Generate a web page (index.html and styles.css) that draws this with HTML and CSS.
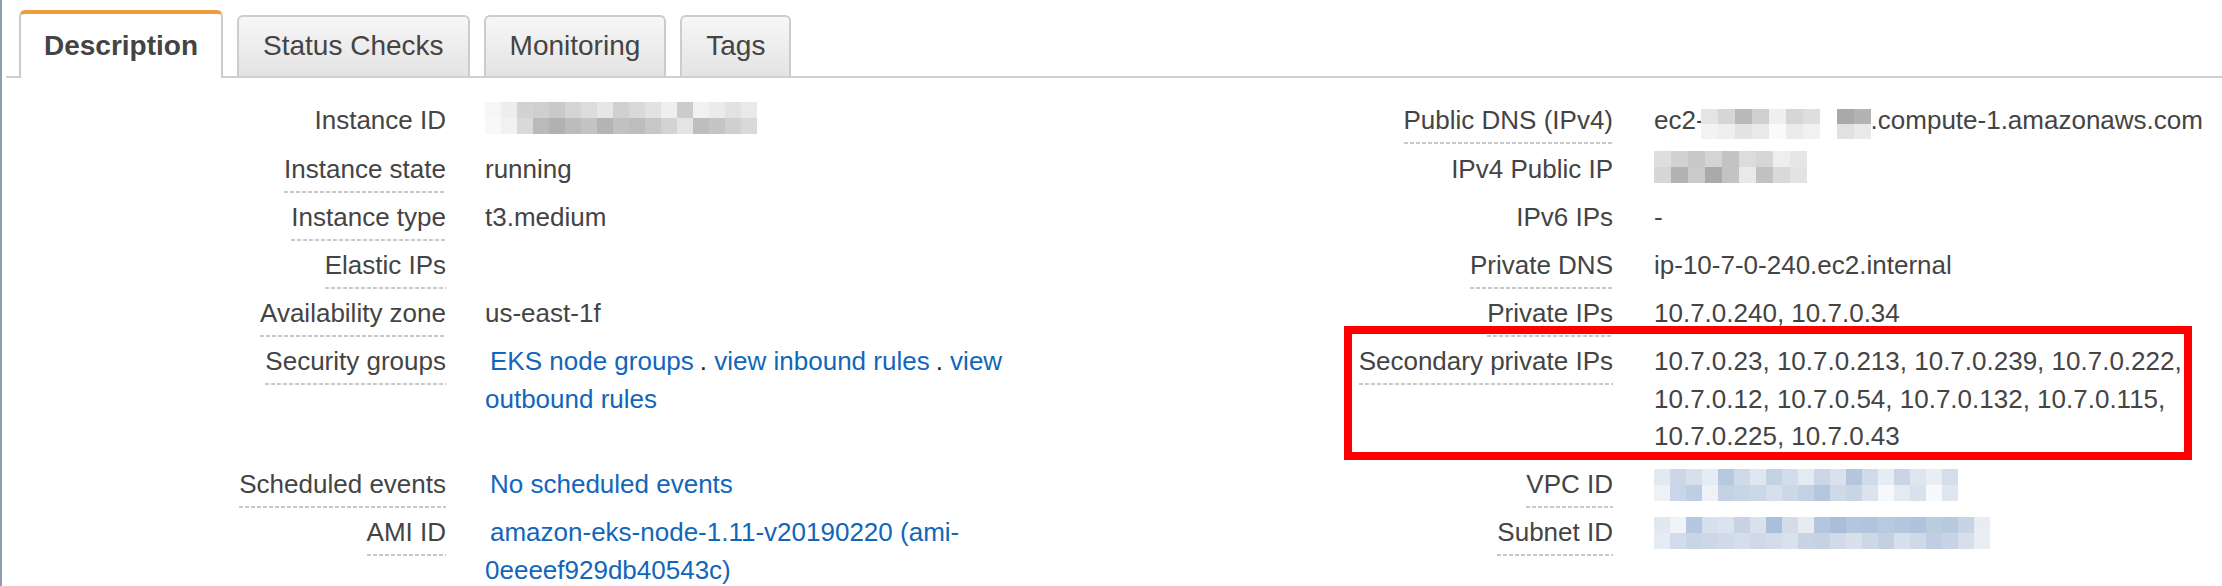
FILE: index.html
```html
<!DOCTYPE html>
<html>
<head>
<meta charset="utf-8">
<title>Instance description</title>
<link rel="stylesheet" href="styles.css">
</head>
<body>
<div class="page">
  <div class="tabs">
    <div class="tab active">Description</div>
    <div class="tab">Status Checks</div>
    <div class="tab">Monitoring</div>
    <div class="tab">Tags</div>
  </div>

  <div class="details">
    <div class="label"><span>Instance ID</span></div>
    <div class="value"><span class="mosaic m-iid"></span></div>
    <div class="label"><span class="tip">Public DNS (IPv4)</span></div>
    <div class="value v2">ec2-<span class="mosaic m-dns"></span>.compute-1.amazonaws.com</div>

    <div class="label"><span class="tip">Instance state</span></div>
    <div class="value">running</div>
    <div class="label"><span>IPv4 Public IP</span></div>
    <div class="value v2"><span class="mosaic m-ip"></span></div>

    <div class="label"><span class="tip">Instance type</span></div>
    <div class="value">t3.medium</div>
    <div class="label"><span>IPv6 IPs</span></div>
    <div class="value v2">-</div>

    <div class="label"><span class="tip">Elastic IPs</span></div>
    <div class="value"></div>
    <div class="label"><span class="tip">Private DNS</span></div>
    <div class="value v2">ip-10-7-0-240.ec2.internal</div>

    <div class="label"><span class="tip">Availability zone</span></div>
    <div class="value">us-east-1f</div>
    <div class="label"><span class="tip">Private IPs</span></div>
    <div class="value v2">10.7.0.240, 10.7.0.34</div>

    <div class="label"><span class="tip">Security groups</span></div>
    <div class="value links"><a href="#">EKS node groups</a><span class="sep">.</span> <a href="#">view inbound rules</a><span class="sep">.</span> <a href="#">view</a> <a href="#">outbound rules</a></div>
    <div class="label"><span class="tip">Secondary private IPs</span></div>
    <div class="value v2">10.7.0.23, 10.7.0.213, 10.7.0.239, 10.7.0.222, 10.7.0.12, 10.7.0.54, 10.7.0.132, 10.7.0.115, 10.7.0.225, 10.7.0.43</div>

    <div class="label"><span class="tip">Scheduled events</span></div>
    <div class="value links"><a href="#">No scheduled events</a></div>
    <div class="label"><span class="tip">VPC ID</span></div>
    <div class="value v2"><span class="mosaic m-vpc"></span></div>

    <div class="label"><span class="tip">AMI ID</span></div>
    <div class="value links"><a href="#">amazon-eks-node-1.11-v20190220 (ami-</a><a href="#">0eeeef929db40543c)</a></div>
    <div class="label"><span class="tip">Subnet ID</span></div>
    <div class="value v2"><span class="mosaic m-subnet"></span></div>
  </div>

  <div class="highlight"></div>
</div>
</body>
</html>
```

FILE: styles.css
```css
html, body {
  margin: 0;
  padding: 0;
  background: #ffffff;
}

body {
  font-family: "Liberation Sans", Arial, Helvetica, sans-serif;
  font-size: 26px;
  color: #444444;
  overflow: hidden;
}

.page {
  position: relative;
  min-height: 586px;
  border-left: 2px solid #8f9bb0;
}

/* ---------- tabs ---------- */
.tabs {
  display: flex;
  align-items: flex-end;
  gap: 14px;
  margin-left: 4px;
  padding-left: 13px;
  padding-top: 10px;
  border-bottom: 2px solid #cfcfcf;
}

.tab {
  font-size: 28px;
  line-height: 40px;
  padding: 9px 24px 10px;
  border: 2px solid #cccccc;
  border-bottom: 0;
  border-radius: 6px 6px 0 0;
  background: linear-gradient(#f7f7f7, #e3e3e3);
  color: #444444;
  white-space: nowrap;
}

.tab.active {
  font-weight: bold;
  background: #ffffff;
  border-top: 4px solid #eb9d3f;
  padding: 12px 23px 12px;
  margin-bottom: -2px;
}

/* ---------- details grid ---------- */
.details {
  display: grid;
  grid-template-columns: 464px 610px 557px 1fr;
  margin-top: 19px;
  line-height: 37.5px;
}

.label {
  text-align: right;
  padding: 5.25px 20px 5.25px 0;
  white-space: nowrap;
}

.value {
  padding: 5.25px 0 5.25px 19px;
}

.value.v2 {
  padding-left: 21px;
}

.value.links {
  text-indent: 5px;
}

.tip {
  padding-bottom: 9px;
  background-image: linear-gradient(to right, #c9c9c9 4px, transparent 4px);
  background-size: 6px 2px;
  background-repeat: repeat-x;
  background-position: left bottom;
}

a {
  color: #1166bb;
  text-decoration: none;
}

.sep {
  color: #222222;
  margin-left: 6px;
}

/* ---------- redacted values (pixelated) ---------- */
.mosaic {
  display: inline-block;
  height: 32px;
  vertical-align: -5px;
  background-repeat: no-repeat;
  background-size: 100% 50%;
  text-indent: 0;
}

.m-iid {
  width: 272px;
  vertical-align: -4px;
  background-image:
    linear-gradient(to right,
      #f6f6f6 0 16px, #ededed 16px 32px, #d2d2d2 32px 48px, #cfcfcf 48px 64px,
      #c9c9c9 64px 80px, #d5d5d5 80px 96px, #dcdcdc 96px 112px, #e6e6e6 112px 128px,
      #d0d0d0 128px 144px, #d9d9d9 144px 160px, #e2e2e2 160px 176px, #efefef 176px 192px,
      #cbcbcb 192px 208px, #f1f1f1 208px 224px, #ebebeb 224px 240px, #e2e2e2 240px 256px,
      #e9e9e9 256px 272px),
    linear-gradient(to right,
      #f8f8f8 0 16px, #f1f1f1 16px 32px, #d9d9d9 32px 48px, #bababa 48px 64px,
      #b1b1b1 64px 80px, #bcbcbc 80px 96px, #c3c3c3 96px 112px, #b4b4b4 112px 128px,
      #c1c1c1 128px 144px, #bdbdbd 144px 160px, #c7c7c7 160px 176px, #d3d3d3 176px 192px,
      #e4e4e4 192px 208px, #bebebe 208px 224px, #c5c5c5 224px 240px, #d0d0d0 240px 256px,
      #d9d9d9 256px 272px);
  background-position: left top, left bottom;
}

.m-dns {
  width: 170px;
  height: 30px;
  margin-left: -4px;
  vertical-align: -10px;
  background-image:
    linear-gradient(to right,
      #e4e4e4 0 17px, #d6d6d6 17px 34px, #b9b9b9 34px 51px, #cfcfcf 51px 68px,
      #efefef 68px 85px, #d6d6d6 85px 102px, #dedede 102px 119px, #ffffff 119px 136px,
      #a9a9a9 136px 153px, #b3b3b3 153px 170px),
    linear-gradient(to right,
      #f3f3f3 0 17px, #eeeeee 17px 34px, #e3e3e3 34px 51px, #e9e9e9 51px 68px,
      #fafafa 68px 85px, #ebebeb 85px 102px, #f1f1f1 102px 119px, #ffffff 119px 136px,
      #e1e1e1 136px 153px, #e9e9e9 153px 170px);
  background-position: left top, left bottom;
}

.m-ip {
  width: 153px;
  background-image:
    linear-gradient(to right,
      #dedede 0 17px, #d2d2d2 17px 34px, #c7c7c7 34px 51px, #d4d4d4 51px 68px,
      #c3c3c3 68px 85px, #dcdcdc 85px 102px, #d6d6d6 102px 119px, #eeeeee 119px 136px,
      #e6e6e6 136px 153px),
    linear-gradient(to right,
      #d6d6d6 0 17px, #b2b2b2 17px 34px, #cacaca 34px 51px, #aaaaaa 51px 68px,
      #c3c3c3 68px 85px, #e9e9e9 85px 102px, #c1c1c1 102px 119px, #d9d9d9 119px 136px,
      #e3e3e3 136px 153px);
  background-position: left top, left bottom;
}

.m-vpc {
  width: 304px;
  vertical-align: -8px;
  background-image:
    linear-gradient(to right,
      #e3e9f1 0 16px, #cbd7e6 16px 32px, #d6dfeb 32px 48px, #e6ecf3 48px 64px,
      #b7c9df 64px 80px, #cfdae8 80px 96px, #e0e7f0 96px 112px, #c3d2e4 112px 128px,
      #d2dcea 128px 144px, #e4eaf2 144px 160px, #cad6e6 160px 176px, #d8e1ed 176px 192px,
      #b3c6de 192px 208px, #d0dbe9 208px 224px, #e6ecf4 224px 240px, #c9d5e6 240px 256px,
      #dde5ef 256px 272px, #e9eef5 272px 288px, #d4deea 288px 304px),
    linear-gradient(to right,
      #eef2f7 0 16px, #c9d6e7 16px 32px, #bfcfe3 32px 48px, #eef2f8 48px 64px,
      #c4d2e4 64px 80px, #c8d5e6 80px 96px, #ccd8e7 96px 112px, #d6dfeb 112px 128px,
      #cdd8e7 128px 144px, #c2d1e4 144px 160px, #b4c7de 160px 176px, #cfd9e8 176px 192px,
      #c8d5e6 192px 208px, #dbe3ee 208px 224px, #f6f8fb 224px 240px, #e4eaf2 240px 256px,
      #d9e1ed 256px 272px, #f7f9fc 272px 288px, #dfe6f0 288px 304px);
  background-position: left top, left bottom;
}

.m-subnet {
  width: 336px;
  vertical-align: -8px;
  background-image:
    linear-gradient(to right,
      #e1e8f1 0 16px, #f0f3f8 16px 32px, #b5c8df 32px 48px, #d7e0ec 48px 64px,
      #dbe3ee 64px 80px, #c5d3e5 80px 96px, #d9e1ed 96px 112px, #a9bfdb 112px 128px,
      #d3ddea 128px 144px, #e7ecf3 144px 160px, #b3c6de 160px 176px, #a9bedb 176px 192px,
      #b3c6de 192px 208px, #b0c4dd 208px 224px, #b8cae0 224px 240px, #b3c6de 240px 256px,
      #b0c3dd 256px 272px, #bcccdf 272px 288px, #b7c9df 288px 304px, #c6d4e5 304px 320px,
      #e8edf4 320px 336px),
    linear-gradient(to right,
      #e6ecf3 0 16px, #d2dcea 16px 32px, #c8d5e6 32px 48px, #ccd8e7 48px 64px,
      #d0dae8 64px 80px, #d5deeb 80px 96px, #cfd9e8 96px 112px, #d3dde9 112px 128px,
      #d9e1ec 128px 144px, #c8d4e4 144px 160px, #c5d2e3 160px 176px, #d0dae8 176px 192px,
      #d7e0eb 192px 208px, #cdd8e7 208px 224px, #c2d0e2 224px 240px, #d7e0ec 240px 256px,
      #cfd9e8 256px 272px, #bfcee2 272px 288px, #c8d4e5 288px 304px, #d6dfeb 304px 320px,
      #e9eef4 320px 336px);
  background-position: left top, left bottom;
}

/* ---------- annotation overlay ---------- */
.highlight {
  position: absolute;
  left: 1342px;
  top: 326px;
  width: 848px;
  height: 134px;
  box-sizing: border-box;
  border: 8px solid #ff0000;
}
```
